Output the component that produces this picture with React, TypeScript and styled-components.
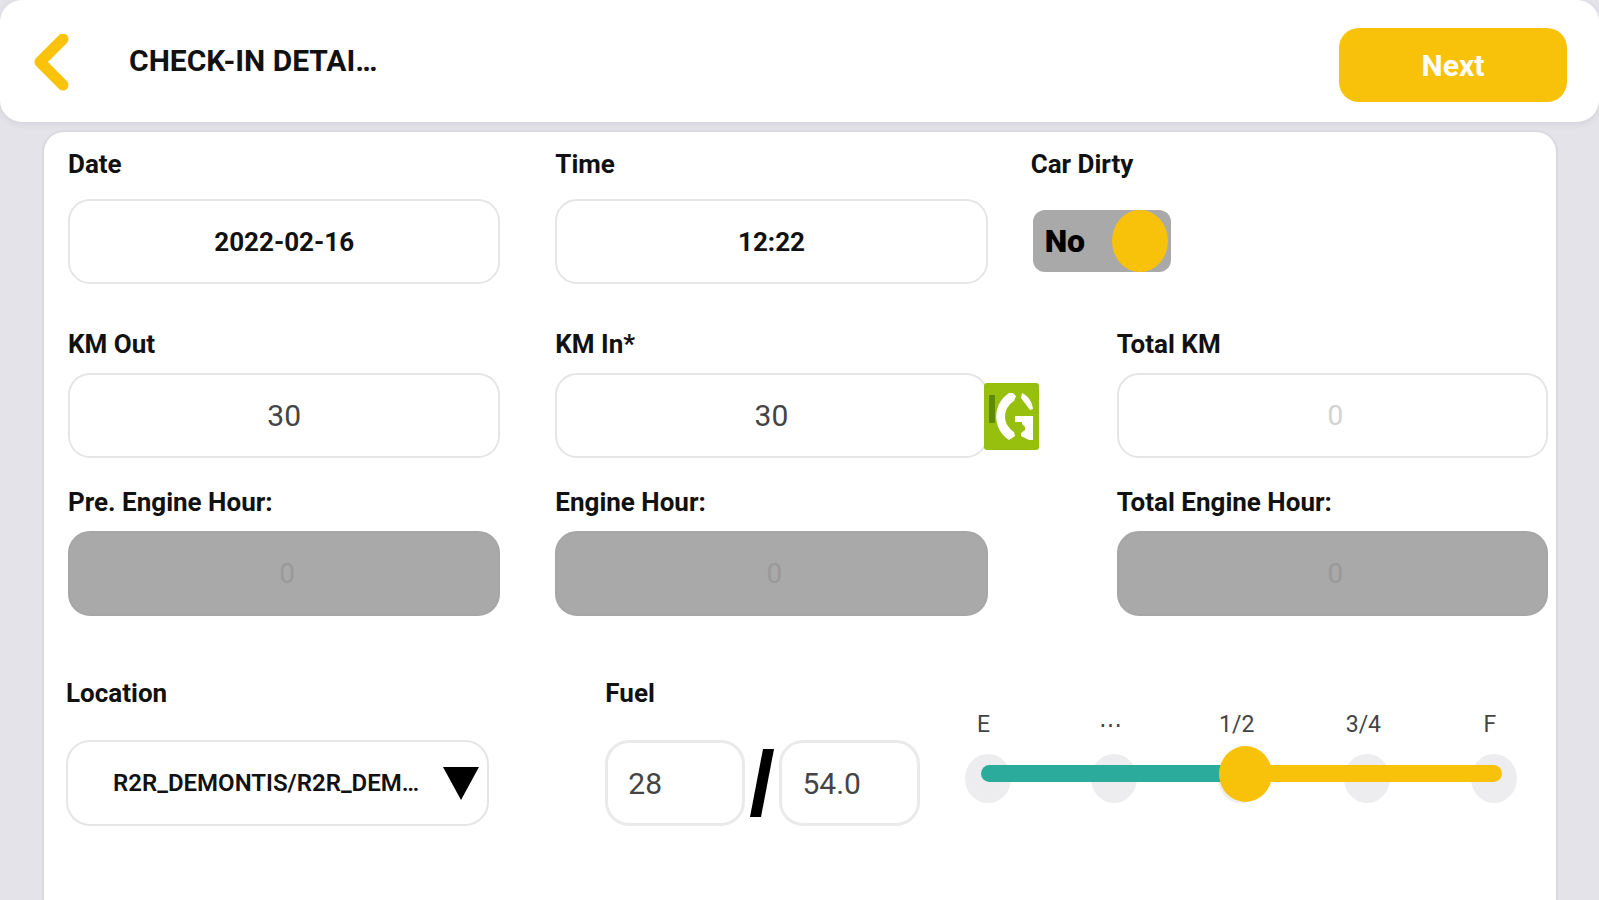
import React, { useState } from "react";
import styled, { createGlobalStyle } from "styled-components";

const GlobalStyle = createGlobalStyle`
  *, *::before, *::after { box-sizing: border-box; }
  body {
    margin: 0;
    background: #e4e3e9;
    color: #111;
    font-family: Roboto, "Liberation Sans", sans-serif;
  }
  input, select, button { font: inherit; color: inherit; margin: 0; }
`;

const Page = styled.div`
  display: flex;
  flex-direction: column;
  min-height: 100vh;
`;

const Header = styled.header`
  display: flex;
  align-items: center;
  height: 122px;
  padding: 8px 32px 0;
  background: #fff;
  border-radius: 22px;
  box-shadow: 0 2px 6px rgba(60, 60, 80, 0.1);
`;

const BackButton = styled.button`
  display: flex;
  padding: 0;
  border: 0;
  background: none;
  cursor: pointer;
`;

const Title = styled.h1`
  flex: 1;
  margin: 0 0 8px 57px;
  font-size: 30px;
  line-height: 36px;
  font-weight: 700;
`;

const NextButton = styled.button`
  width: 228px;
  height: 74px;
  border: 0;
  border-radius: 20px;
  background: #f9c20a;
  color: #fff;
  font-size: 30px;
  font-weight: 700;
  cursor: pointer;
`;

const Panel = styled.form`
  flex: 1;
  margin: 8px 41px 0 42px;
  padding: 18px 8px 40px 24px;
  background: #fff;
  border: 2px solid #dad9df;
  border-bottom: 0;
  border-radius: 22px 22px 0 0;
`;

const Row = styled.div<{ $columns: string; $space?: number }>`
  display: grid;
  grid-template-columns: ${(p) => p.$columns};
  align-items: start;
  margin-top: ${(p) => p.$space ?? 0}px;
`;

const FuelRow = styled(Row)`
  margin-left: -2px;
`;

const Field = styled.div<{ $column: number; $gap: number }>`
  grid-column: ${(p) => p.$column};
  display: flex;
  flex-direction: column;
  align-items: flex-start;
  gap: ${(p) => p.$gap}px;
  min-width: 0;
`;

const Label = styled.label`
  font-size: 26px;
  line-height: 28px;
  font-weight: 700;
  white-space: nowrap;
`;

const TextInput = styled.input<{ $strong?: boolean }>`
  width: 100%;
  height: 85px;
  padding: 0;
  border: 2px solid #e5e5e5;
  border-radius: 22px;
  background: #fff;
  text-align: center;
  font-size: ${(p) => (p.$strong ? 26 : 30)}px;
  font-weight: ${(p) => (p.$strong ? 700 : 400)};
  color: ${(p) => (p.$strong ? "#111" : "#444")};
  &::placeholder { color: #d2d2d2; opacity: 1; }
  &:placeholder-shown { padding-left: 6px; font-size: 28px; }
  &:disabled { background: #a9a9a9; border-color: #a6a6a6; }
  &:disabled::placeholder { color: #999; }
`;

const InputWithLogo = styled.div`
  position: relative;
  width: 100%;
`;

const LogoButton = styled.button`
  position: absolute;
  left: calc(100% - 4px);
  top: 10px;
  display: flex;
  padding: 0;
  border: 0;
  background: none;
  cursor: pointer;
`;

const Switch = styled.label`
  display: flex;
  align-items: center;
  justify-content: space-between;
  width: 138px;
  height: 62px;
  margin: 11px 0 0 2px;
  padding: 0 3px 0 12px;
  border-radius: 12px;
  background: #a9a9a9;
  color: #000;
  font-size: 32px;
  font-weight: 900;
  cursor: pointer;
`;

const Knob = styled.input`
  appearance: none;
  width: 56px;
  height: 62px;
  border-radius: 50%;
  background: #f9c20a;
  cursor: pointer;
`;

const SelectBox = styled.div`
  display: grid;
  width: 100%;
  align-items: center;
  > * { grid-area: 1 / 1; }
  > svg { justify-self: end; margin-right: 10px; pointer-events: none; }
`;

const Select = styled.select`
  appearance: none;
  width: 100%;
  height: 86px;
  padding: 0 60px 0 45px;
  border: 2px solid #e5e5e5;
  border-radius: 24px;
  background: #fff;
  font-size: 24px;
  font-weight: 600;
`;

const FuelAmounts = styled.div`
  display: grid;
  grid-template-columns: 1fr 34px 1fr;
  align-items: center;
  justify-items: center;
  width: 100%;
`;

const FuelInput = styled.input`
  width: 100%;
  height: 86px;
  padding: 0 20px;
  border: 3px solid #eaeaea;
  border-radius: 24px;
  background: #fff;
  font-size: 30px;
  color: #444;
`;

const Gauge = styled.div`
  grid-column: 5;
  padding-top: 32px;
`;

const GaugeLabels = styled.div`
  display: flex;
  justify-content: space-between;
  margin: 0 4px 11px -4px;
  span {
    width: 46px;
    text-align: center;
    font-size: 23px;
    line-height: 28px;
    color: #444;
  }
`;

const GaugeTrack = styled.div`
  display: grid;
  > * { grid-area: 1 / 1; }
`;

const Dots = styled.div`
  display: flex;
  justify-content: space-between;
  padding-top: 4px;
  i {
    width: 46px;
    height: 49px;
    border-radius: 50%;
    background: #ededef;
  }
`;

const Range = styled.input`
  appearance: none;
  align-self: start;
  height: 17px;
  margin: 15px 15px 0 16px;
  border-radius: 9px;
  background: linear-gradient(to right, #2aab9b 51%, #f9c20a 51%);
  cursor: pointer;
  &::-webkit-slider-thumb {
    appearance: none;
    width: 53px;
    height: 56px;
    border-radius: 50%;
    background: #f9c20a;
  }
`;

const DATE_COLUMNS = "432fr 55fr 432fr 43fr 517fr";
const METER_COLUMNS = "432fr 55fr 432fr 129fr 431fr";
const FUEL_COLUMNS = "423fr 116fr 314fr 45fr 552fr 31fr";

const BackIcon = () => (
  <svg width="40" height="62" viewBox="0 0 40 62" fill="none" aria-hidden="true">
    <path d="M31 5 8 28 31 51" stroke="#fbc20a" strokeWidth="11" strokeLinecap="round" strokeLinejoin="round" />
  </svg>
);

const GreenLogo = () => (
  <svg width="55" height="67" viewBox="0 0 55 67" aria-hidden="true">
    <rect width="55" height="67" rx="3" fill="#97bf0d" />
    <rect x="5" y="12" width="6" height="28" fill="#5f8a05" />
    <path d="M25 10C8 21 8 46 25 57l6-4-1-4C18 41 18 26 30 18l2-5-3-3Z" fill="#fff" />
    <path d="M38 10c6 3 10 8 11 16l-3 1-9-12Z" fill="#fff" />
    <path d="M31 33h18v24h-4l-8-4v-3l4-3v-3l-3-3v-2h-7Z" fill="#fff" />
  </svg>
);

const Slash = () => (
  <svg width="24" height="68" viewBox="0 0 24 68" aria-hidden="true">
    <path d="M13 0h11L11 68H0Z" fill="#000" />
  </svg>
);

const Caret = () => (
  <svg width="36" height="33" viewBox="0 0 36 33" aria-hidden="true">
    <path d="M0 0h36L18 33Z" fill="#000" />
  </svg>
);

type EntryProps = {
  id: string;
  label: string;
  column: number;
  gap: number;
  value?: string;
  strong?: boolean;
  disabled?: boolean;
};

const Entry = ({ id, label, column, gap, value, strong, disabled }: EntryProps) => (
  <Field $column={column} $gap={gap}>
    <Label htmlFor={id}>{label}</Label>
    <TextInput id={id} $strong={strong} defaultValue={value} placeholder="0" disabled={disabled} />
  </Field>
);

export default function App() {
  const [dirty, setDirty] = useState(false);
  return (
    <>
      <GlobalStyle />
      <Page>
        <Header>
          <BackButton type="button" aria-label="Back"><BackIcon /></BackButton>
          <Title>CHECK-IN DETAI…</Title>
          <NextButton type="button">Next</NextButton>
        </Header>
        <Panel>
          <Row $columns={DATE_COLUMNS}>
            <Entry id="date" label="Date" column={1} gap={21} value="2022-02-16" strong />
            <Entry id="time" label="Time" column={3} gap={21} value="12:22" strong />
            <Field $column={5} $gap={21}>
              <Label htmlFor="dirty">Car Dirty</Label>
              <Switch>
                {dirty ? "Yes" : "No"}
                <Knob id="dirty" type="checkbox" checked={dirty} onChange={(e) => setDirty(e.target.checked)} />
              </Switch>
            </Field>
          </Row>
          <Row $columns={METER_COLUMNS} $space={46}>
            <Entry id="km-out" label="KM Out" column={1} gap={15} value="30" />
            <Field $column={3} $gap={15}>
              <Label htmlFor="km-in">KM In*</Label>
              <InputWithLogo>
                <TextInput id="km-in" defaultValue="30" />
                <LogoButton type="button" aria-label="Read from tracker"><GreenLogo /></LogoButton>
              </InputWithLogo>
            </Field>
            <Entry id="km-total" label="Total KM" column={5} gap={15} />
          </Row>
          <Row $columns={METER_COLUMNS} $space={30}>
            <Entry id="hour-pre" label="Pre. Engine Hour:" column={1} gap={15} disabled />
            <Entry id="hour" label="Engine Hour:" column={3} gap={15} disabled />
            <Entry id="hour-total" label="Total Engine Hour:" column={5} gap={15} disabled />
          </Row>
          <FuelRow $columns={FUEL_COLUMNS} $space={63}>
            <Field $column={1} $gap={33}>
              <Label htmlFor="location">Location</Label>
              <SelectBox>
                <Select id="location">
                  <option>R2R_DEMONTIS/R2R_DEM…</option>
                </Select>
                <Caret />
              </SelectBox>
            </Field>
            <Field $column={3} $gap={33}>
              <Label htmlFor="fuel">Fuel</Label>
              <FuelAmounts>
                <FuelInput id="fuel" defaultValue="28" />
                <Slash />
                <FuelInput aria-label="Tank capacity" defaultValue="54.0" />
              </FuelAmounts>
            </Field>
            <Gauge>
              <GaugeLabels>
                <span>E</span>
                <span>⋯</span>
                <span>1/2</span>
                <span>3/4</span>
                <span>F</span>
              </GaugeLabels>
              <GaugeTrack>
                <Dots><i /><i /><i /><i /><i /></Dots>
                <Range type="range" aria-label="Fuel level" min={0} max={100} defaultValue={51} />
              </GaugeTrack>
            </Gauge>
          </FuelRow>
        </Panel>
      </Page>
    </>
  );
}
